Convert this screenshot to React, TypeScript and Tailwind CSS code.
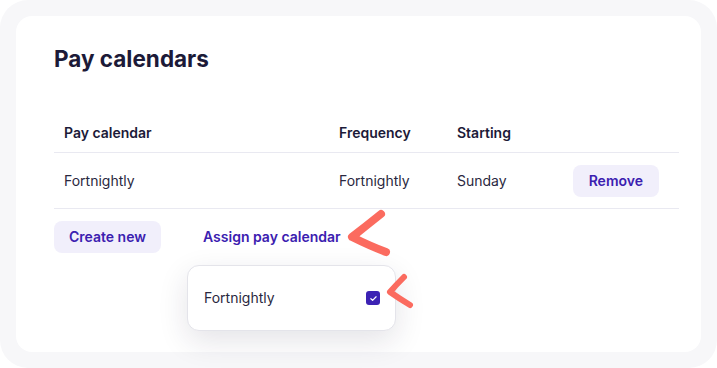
import React from "react";

const rows = [{ name: "Fortnightly", frequency: "Fortnightly", starting: "Sunday" }];

function Checkbox() {
  return (
    <span className="flex h-[14px] w-[14px] items-center justify-center rounded-[3px] bg-[#3c22b4]">
      <svg width="9" height="9" viewBox="0 0 12 12" fill="none">
        <path d="M2.5 6.3l2.3 2.2 4.7-4.8" stroke="white" strokeWidth="1.6" strokeLinecap="round" strokeLinejoin="round" />
      </svg>
    </span>
  );
}

export default function App() {
  return (
    <div className="bg-white" style={{ fontFamily: "Inter, 'Noto Sans', sans-serif" }}>
      <div className="relative h-[368px] w-[717px] rounded-[28px] bg-[#f7f7f9] p-4">
        <div className="h-full rounded-2xl bg-white pl-[38px] pr-[22px] pt-[29px] text-[#1e1b3a]">
          <h1 className="text-[22.5px] font-bold leading-7 text-[#1c1a38]">Pay calendars</h1>

          <div className="mt-[40px] text-sm">
            <div className="grid h-10 grid-cols-[275px_118px_117px_1fr] items-center border-b border-[#e9e9f1] font-semibold text-[#1c1a38]">
              <div className="pl-2.5">Pay calendar</div>
              <div className="pl-2.5">Frequency</div>
              <div className="pl-2.5">Starting</div>
              <div />
            </div>
            {rows.map((r) => (
              <div key={r.name} className="grid h-14 grid-cols-[275px_118px_117px_1fr] items-center border-b border-[#e9e9f1] text-[#2a2840]">
                <div className="pl-2.5">{r.name}</div>
                <div className="pl-2.5">{r.frequency}</div>
                <div className="pl-2.5">{r.starting}</div>
                <div className="flex justify-end pr-5">
                  <button className="h-8 rounded-lg bg-[#f1effb] px-4 font-semibold text-[#3b20b0]">Remove</button>
                </div>
              </div>
            ))}
          </div>

          <div className="mt-3 flex items-center gap-[26px] text-sm font-semibold text-[#3b20b0]">
            <button className="h-8 w-[107px] rounded-lg bg-[#f1effb]">Create new</button>
            <div className="relative">
              <button className="h-8 rounded-lg px-4">Assign pay calendar</button>
              <div className="absolute left-0 top-11 flex h-[66px] w-[209px] items-center justify-between rounded-xl border border-[#e4e4ea] bg-white pl-4 pr-[15px] font-normal text-[#2a2840] shadow-[0_10px_30px_rgba(30,27,58,0.12)]">
                <span>Fortnightly</span>
                <Checkbox />
              </div>
            </div>
          </div>
        </div>

        <svg className="pointer-events-none absolute left-0 top-0" width="717" height="368" fill="none">
          <path d="M381 214 Q366 226 352 237 Q370 246 386 252" stroke="#fb6b5f" strokeWidth="8" strokeLinecap="round" strokeLinejoin="round" />
          <path d="M404 277 Q396 285 390 292 Q400 299 410 305" stroke="#fb6b5f" strokeWidth="6" strokeLinecap="round" strokeLinejoin="round" />
        </svg>
      </div>
    </div>
  );
}
